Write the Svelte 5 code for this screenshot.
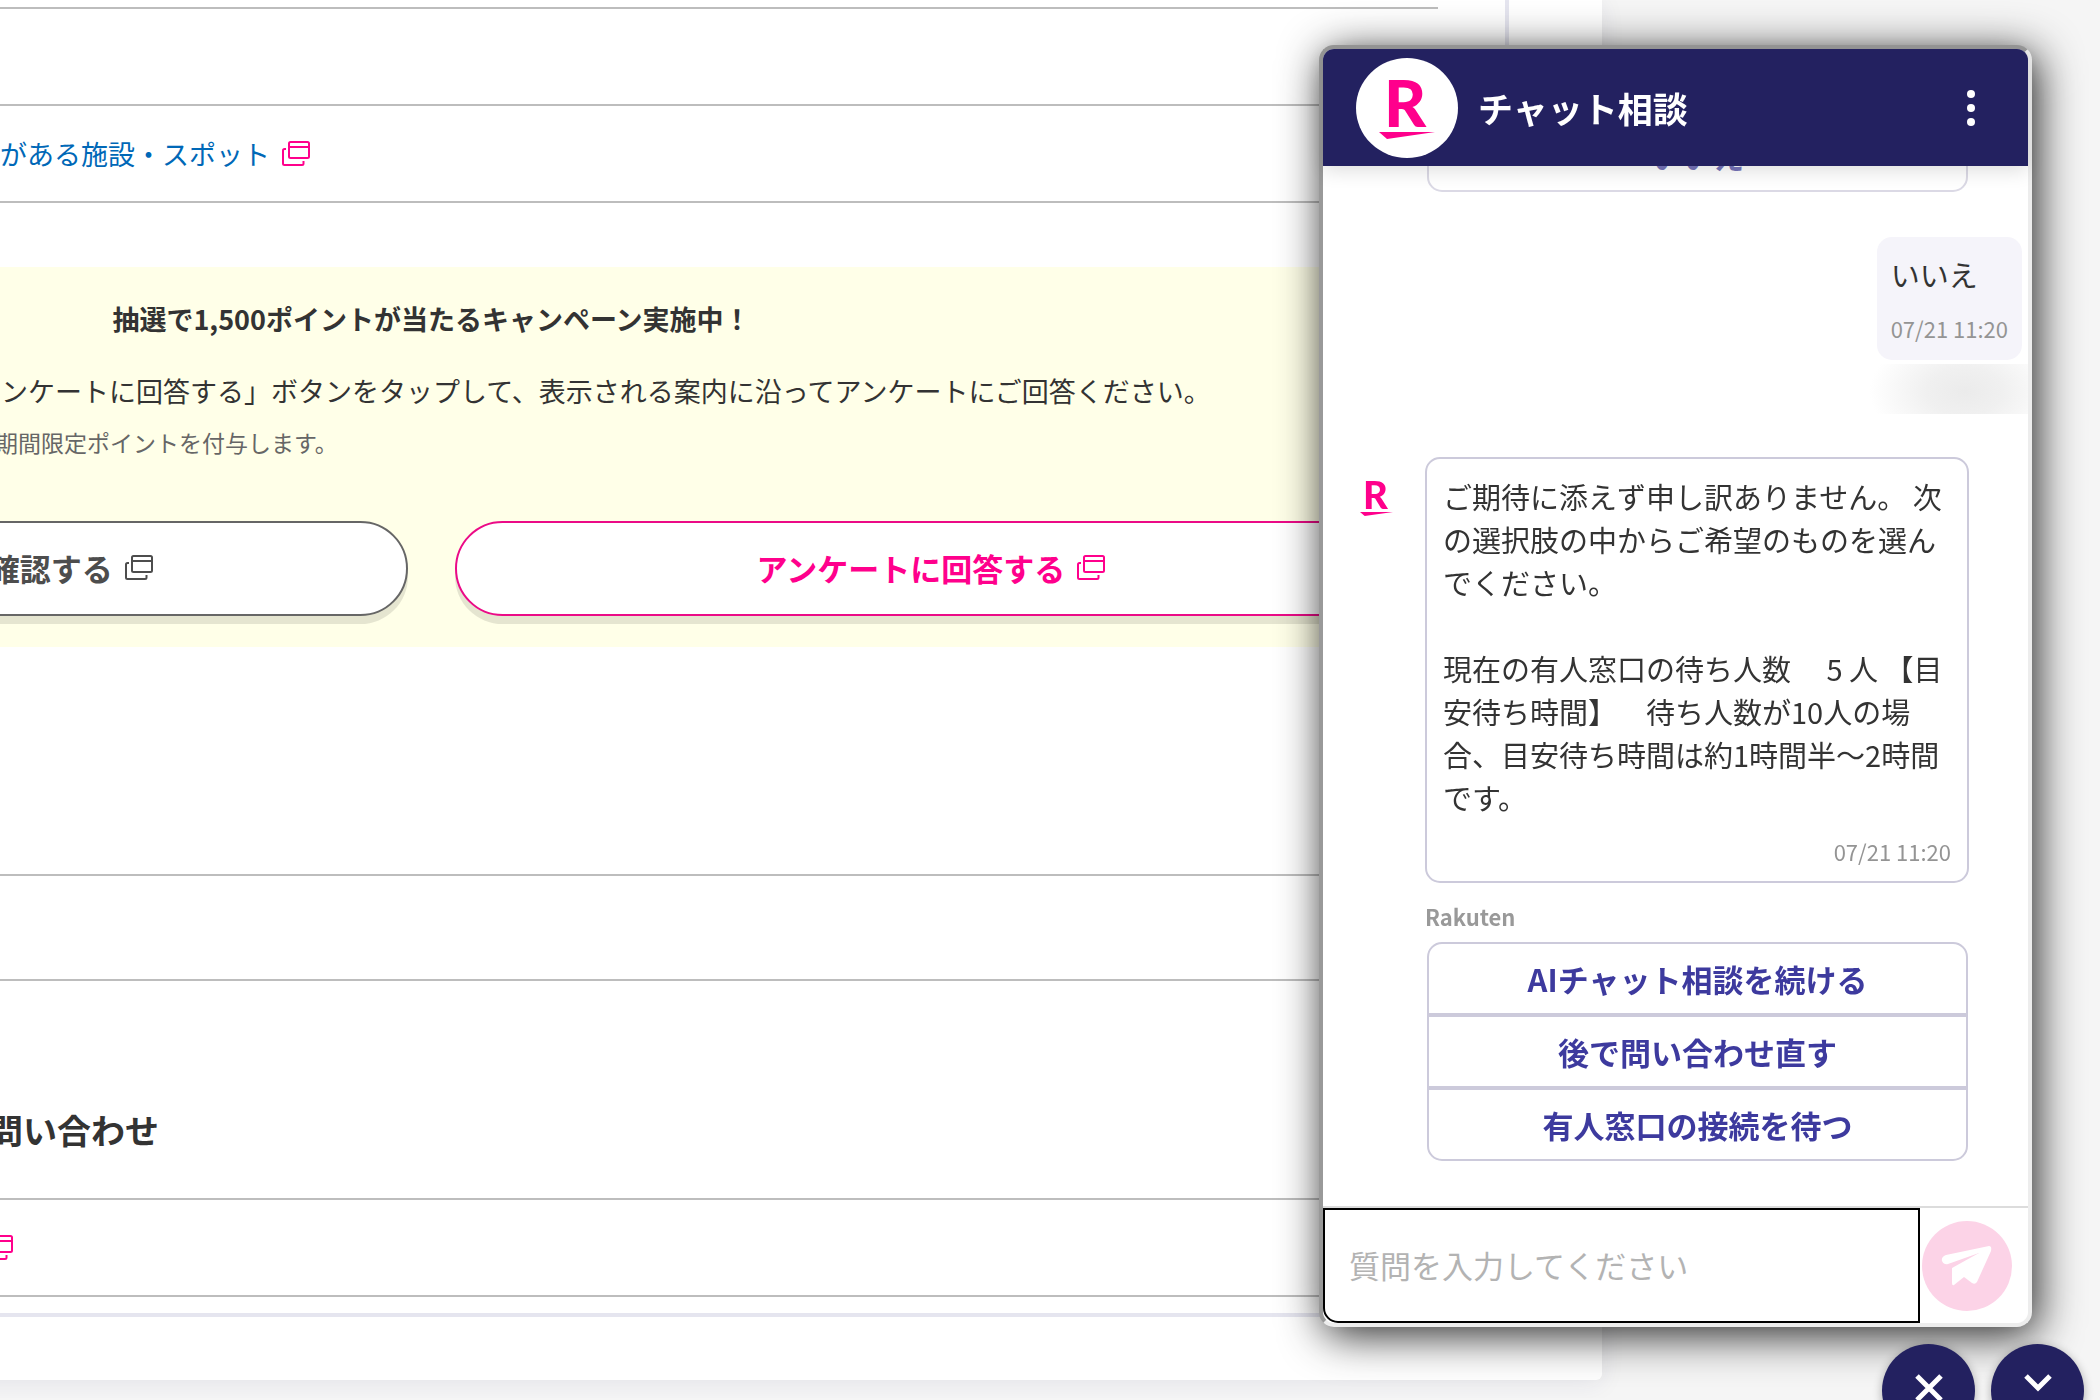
<script lang="ts">
	/**
	 * Help page with the chat support window opened on top of it
	 */

	const stamp = '07/21 11:20';
	const choices = ['AIチャット相談を続ける', '後で問い合わせ直す', '有人窓口の接続を待つ'];

	let draft = $state('');
</script>

{#snippet windowIcon()}
	<svg class="window-icon" viewBox="0 0 28 25" aria-hidden="true">
		<rect x="7" y="1" width="20" height="16" rx="1.5" />
		<path d="M7 6h20M4 8H2.500Q1 8 1 9.500V22.500Q1 24 2.500 24H20Q21.500 24 21.500 22.500V20" />
	</svg>
{/snippet}

{#snippet brandMark()}
	<svg class="brand-mark" viewBox="0 0 56 60" role="img" aria-label="Rakuten">
		<text x="5" y="47">R</text>
		<path d="M0 52H56L8 59Z" />
	</svg>
{/snippet}

<main class="panel">
	<div class="frame">
		<div class="row"></div>
		<div class="row last">
			<a class="row-link" href="#spots">がある施設・スポット {@render windowIcon()}</a>
		</div>

		<section class="campaign">
			<h2>抽選で1,500ポイントが当たるキャンペーン実施中！</h2>
			<p class="lead">
				ンケートに回答する」ボタンをタップして、表示される案内に沿ってアンケートにご回答ください。
			</p>
			<p class="note">期間限定ポイントを付与します。</p>
			<div class="campaign-actions">
				<a class="pill" href="#detail">キャンペーン詳細を確認する {@render windowIcon()}</a>
				<a class="pill pink" href="#survey">アンケートに回答する {@render windowIcon()}</a>
			</div>
		</section>

		<div class="row tall"></div>
		<section class="contact">
			<h2>問い合わせ</h2>
		</section>
		<div class="row last">
			<a class="row-link icon-only" href="#contact" aria-label="問い合わせ">{@render windowIcon()}</a>
		</div>
	</div>
</main>

<section class="chat">
	<header class="chat-header">
		<span class="avatar">{@render brandMark()}</span>
		<h1>チャット相談</h1>
		<button class="menu" type="button" aria-label="メニュー">
			<svg viewBox="0 0 8 36">
				<circle cx="4" cy="4" r="4" />
				<circle cx="4" cy="18" r="4" />
				<circle cx="4" cy="32" r="4" />
			</svg>
		</button>
	</header>

	<div class="messages">
		<div class="choices answered">
			<button type="button">いいえ</button>
		</div>

		<div class="bubble mine">
			<p>いいえ</p>
			<time>{stamp}</time>
		</div>
		<div class="smudge"></div>

		<div class="bot">
			<span class="bot-mark">{@render brandMark()}</span>
			<div class="bubble">
				<p>ご期待に添えず申し訳ありません。 次の選択肢の中からご希望のものを選んでください。</p>
				<p>現在の有人窓口の待ち人数　 5 人 【目安待ち時間】　待ち人数が10人の場合、目安待ち時間は約1時間半～2時間です。</p>
				<time>{stamp}</time>
			</div>
		</div>
		<p class="sender">Rakuten</p>

		<div class="choices">
			{#each choices as choice}
				<button type="button">{choice}</button>
			{/each}
		</div>
	</div>

	<form class="composer" onsubmit={(e) => e.preventDefault()}>
		<input
			type="text"
			bind:value={draft}
			placeholder="質問を入力してください"
			aria-label="質問を入力してください"
		/>
		<button class="send" type="submit" aria-label="送信">
			<svg viewBox="0 0 90 90">
				<path
					d="M67 25Q70 25 69 30L55 61Q53 64 50 62L42 56L32 64Q30 65 30 62V47L57 32L26 43Q22 44 20 40Q19 36 24 34Z"
				/>
			</svg>
		</button>
	</form>
</section>

<div class="float-buttons">
	<button type="button" aria-label="閉じる">
		<svg viewBox="0 0 28 28"><path d="M2 2L26 26M26 2L2 26" /></svg>
	</button>
	<button type="button" aria-label="最小化">
		<svg viewBox="0 0 28 28"><path d="M2 2L14 14L26 2" /></svg>
	</button>
</div>

<style>
	:global(body) {
		background: #f5f5f5;
		overflow: hidden;
		color: #333;
		font-family: 'Noto Sans CJK JP', sans-serif;
	}

	h1,
	h2,
	p {
		margin: 0;
	}

	button,
	input {
		font: inherit;
		padding: 0;
		border: 0;
	}

	/* page: wider than the viewport, its left part is scrolled out */
	.panel {
		margin: 0 498px 18px -739px;
		padding: 0 93px 63px;
		background: #fff;
		border-radius: 0 0 6px 6px;
		box-shadow: 0 4px 24px rgba(35, 33, 96, 0.08);
	}

	.frame {
		border: 4px solid #e5e5ef;
		border-top: 0;
		padding: 7px 67px 16px;
	}

	.row {
		box-sizing: border-box;
		height: 97px;
		padding-left: 575px;
		border-top: 2px solid #bdbdbd;
		display: flex;
		align-items: center;
	}

	.row.last {
		height: 99px;
		border-bottom: 2px solid #bdbdbd;
	}

	.row.tall {
		height: 105px;
	}

	.row-link {
		display: flex;
		align-items: center;
		gap: 12px;
		color: #0068b7;
		font-size: 27px;
		line-height: 43px;
		text-decoration: none;
	}

	.row-link .window-icon {
		color: #ff008c;
	}

	.icon-only {
		margin-left: -15px;
	}

	.window-icon {
		width: 28px;
		height: 25px;
		flex: none;
		fill: none;
		stroke: currentColor;
		stroke-width: 2;
	}

	.campaign {
		margin: 64px 0 227px;
		padding: 30px 31px 31px;
		background: #ffffe8;
	}

	.campaign h2 {
		font-size: 27px;
		line-height: 43px;
		text-align: center;
	}

	.lead {
		margin-top: 29px;
		padding-left: 545px;
		font-size: 27px;
		line-height: 43px;
	}

	.note {
		margin-top: 11px;
		padding-left: 539px;
		color: #666;
		font-size: 23px;
		line-height: 38px;
	}

	.campaign-actions {
		display: flex;
		gap: 47px;
		margin-top: 60px;
	}

	.pill {
		flex: 1;
		box-sizing: border-box;
		height: 95px;
		padding-bottom: 2px;
		display: flex;
		align-items: center;
		justify-content: center;
		gap: 12px;
		border: 2px solid #666;
		border-radius: 48px;
		background: #fff;
		box-shadow: 0 8px 0 rgba(0, 0, 0, 0.1);
		color: #4d4d4d;
		font-size: 31px;
		font-weight: 700;
		text-decoration: none;
	}

	.pill.pink {
		border-color: #eb0a87;
		color: #ff008c;
	}

	.contact {
		padding: 124px 0 43px 564px;
		border-top: 2px solid #bdbdbd;
	}

	.contact h2 {
		font-size: 34px;
		line-height: 50px;
	}

	/* chat window */
	.chat {
		position: fixed;
		top: 45px;
		right: 68px;
		bottom: 73px;
		width: 705px;
		display: flex;
		flex-direction: column;
		border: 4px solid;
		border-color: #999 #ededed #ededed #999;
		border-radius: 15px;
		background: #fff;
		box-shadow: 5px 8px 44px rgba(0, 0, 0, 0.85);
	}

	.chat-header {
		position: relative;
		z-index: 1;
		display: flex;
		align-items: center;
		gap: 20px;
		height: 117px;
		padding: 0 53px 0 33px;
		border-radius: 11px 11px 0 0;
		background: #232160;
		box-shadow: 0 4px 20px rgba(0, 0, 0, 0.14);
		color: #fff;
	}

	.avatar {
		box-sizing: border-box;
		width: 102px;
		height: 100px;
		padding-top: 4px;
		display: grid;
		place-items: center;
		border-radius: 50%;
		background: #fff;
	}

	.brand-mark {
		width: 56px;
		height: 60px;
		fill: #ff008c;
		font-family: Lato, sans-serif;
		font-size: 65px;
		font-weight: 900;
	}

	.chat-header h1 {
		flex: 1;
		font-size: 35px;
		line-height: 50px;
	}

	.menu {
		display: flex;
		background: none;
	}

	.menu svg {
		width: 8px;
		height: 36px;
		fill: #fff;
	}

	.messages {
		flex: 1;
		min-height: 0;
		display: flex;
		flex-direction: column;
		justify-content: flex-end;
		overflow: hidden;
		padding-bottom: 45px;
	}

	.choices {
		flex: none;
		margin: 0 60px 0 104px;
		display: flex;
		flex-direction: column;
	}

	.choices.answered {
		opacity: 0.7;
	}

	.choices button {
		height: 73px;
		border: 2px solid #cccadb;
		background: #fff;
		color: #3d3a9e;
		font-size: 31px;
		font-weight: 700;
	}

	.choices button:first-child {
		border-top-left-radius: 15px;
		border-top-right-radius: 15px;
	}

	.choices button:last-child {
		border-bottom-left-radius: 15px;
		border-bottom-right-radius: 15px;
	}

	.bubble {
		border: 2px solid #cccadb;
		border-radius: 15px;
		padding: 16px 16px 14px;
		font-size: 29px;
		line-height: 43px;
		text-spacing-trim: space-all;
	}

	.bubble p + p {
		margin-top: 43px;
	}

	.bubble time {
		display: block;
		margin-top: 16px;
		color: #949494;
		font-size: 22px;
		line-height: 32px;
		text-align: right;
		white-space: nowrap;
	}

	.bubble.mine {
		flex: none;
		align-self: flex-end;
		margin: 45px 6px 0 0;
		padding: 16px 14px;
		border: 0;
		background: #f5f4fa;
	}

	/* blurred-out status line below the reply */
	.smudge {
		flex: none;
		align-self: flex-end;
		width: 158px;
		height: 50px;
		margin: 4px 0 43px;
		background: radial-gradient(ellipse 95px 60px at 60% 55%, #ebebeb, #f0f0f0 40%, #fff);
	}

	.bot {
		flex: none;
		display: flex;
		margin: 0 59px 0 37px;
		gap: 32px;
	}

	.bot .bubble {
		flex: 1;
	}

	.bot-mark {
		padding-top: 24px;
	}

	.bot-mark .brand-mark {
		width: 33px;
		height: 36px;
	}

	.sender {
		margin: 18px 0 10px 102px;
		color: #999;
		font-size: 22px;
		font-weight: 700;
		line-height: 31px;
	}

	.composer {
		display: flex;
		align-items: center;
		height: 115px;
		padding-right: 16px;
		gap: 2px;
		border-top: 2px solid #dcdcdc;
	}

	.composer input {
		flex: 1;
		min-width: 0;
		box-sizing: border-box;
		height: 100%;
		padding: 0 24px 3px;
		border: 2px solid #000;
		border-radius: 0 0 0 15px;
		outline: 0;
		background: #fff;
		font-size: 31px;
	}

	.composer input::placeholder {
		color: #b3b3b3;
		opacity: 1;
	}

	.send {
		width: 90px;
		height: 90px;
		border-radius: 50%;
		background: #fcd3e7;
	}

	.send svg {
		display: block;
		fill: #fff;
	}

	.float-buttons {
		position: fixed;
		right: 16px;
		bottom: -37px;
		display: flex;
		gap: 16px;
	}

	.float-buttons button {
		width: 93px;
		height: 93px;
		border-radius: 50%;
		background: #232160;
		box-shadow: 0 2px 10px rgba(0, 0, 0, 0.3);
	}

	.float-buttons svg {
		width: 28px;
		height: 28px;
		fill: none;
		stroke: #fff;
		stroke-width: 5;
	}
</style>
